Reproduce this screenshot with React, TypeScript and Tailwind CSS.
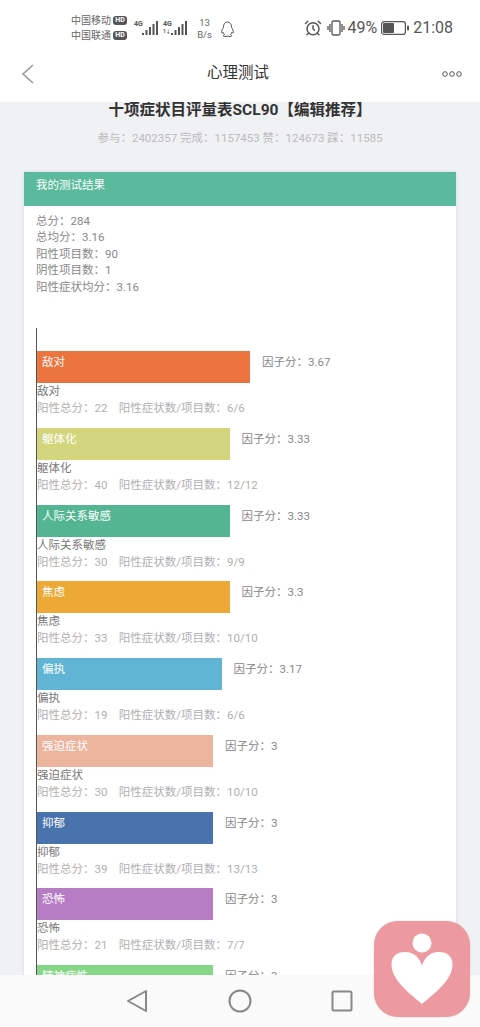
import { AlarmClock } from 'lucide-react';

const factors = [
  { name: '敌对', score: '3.67', width: 213, color: 'bg-[#ec743e]', total: 22, ratio: '6/6' },
  { name: '躯体化', score: '3.33', width: 192.5, color: 'bg-[#d4d67e]', total: 40, ratio: '12/12' },
  { name: '人际关系敏感', score: '3.33', width: 192.5, color: 'bg-[#53b591]', total: 30, ratio: '9/9' },
  { name: '焦虑', score: '3.3', width: 192.5, color: 'bg-[#eca935]', total: 33, ratio: '10/10' },
  { name: '偏执', score: '3.17', width: 184.5, color: 'bg-[#5fb5d3]', total: 19, ratio: '6/6' },
  { name: '强迫症状', score: '3', width: 176, color: 'bg-[#edb49e]', total: 30, ratio: '10/10' },
  { name: '抑郁', score: '3', width: 176, color: 'bg-[#4973ad]', total: 39, ratio: '13/13' },
  { name: '恐怖', score: '3', width: 176, color: 'bg-[#b67dc5]', total: 21, ratio: '7/7' },
  { name: '精神病性', score: '3', width: 176, color: 'bg-[#85d686]', total: 20, ratio: '10/10' },
];

function HdBadge() {
  return (
    <span className="flex h-[9px] w-[14px] items-center justify-center rounded-[3px] bg-[#555] text-[7px] font-bold leading-none text-white">
      HD
    </span>
  );
}

function Signal({ dot }: { dot?: boolean }) {
  return (
    <div className="flex items-start">
      <div className="flex w-[8px] flex-col text-[7px] font-bold leading-[8px] text-[#555]">
        <span>4G</span>
        <span className="h-[6px] text-[5px] leading-[6px]">{dot ? '1↓' : ''}</span>
      </div>
      <svg width="16" height="16" viewBox="0 0 16 16" fill="#555">
        <rect x="0" y="13" width="2" height="2" />
        <rect x="3.500" y="10" width="2" height="5" />
        <rect x="7" y="7" width="2" height="8" />
        <rect x="10.500" y="4" width="2" height="11" />
        <rect x="14" y="1" width="2" height="14" />
      </svg>
    </div>
  );
}

function StatusBar() {
  return (
    <div className="flex h-[56px] shrink-0 items-center bg-white pl-[71px] pr-[27px] text-[#555]">
      <div className="flex w-[59px] flex-col gap-[1px] text-[10px] leading-[14px] text-[#666]">
        <div className="flex items-center gap-[2px]"><span className="whitespace-nowrap">中国移动</span><HdBadge /></div>
        <div className="flex items-center gap-[2px]"><span className="whitespace-nowrap">中国联通</span><HdBadge /></div>
      </div>
      <div className="ml-[4px] flex gap-[5px]">
        <Signal />
        <Signal dot />
      </div>
      <div className="ml-[9px] flex w-[17px] flex-col items-center pt-[2px] text-[9.500px] leading-[12px] text-[#666]">
        <span>13</span>
        <span>B/s</span>
      </div>
      <svg className="ml-[7px] mt-[2px]" width="15" height="17" viewBox="0 0 15 17" fill="none" stroke="#555" strokeWidth="1">
        <path d="M3.400 6.500C3.400 3 5 1 7.500 1s4.100 2 4.100 5.500c.9 1.300 2 3.400 1.700 5.300-.5.500-1 .200-1.500-.500-.2 1-.7 1.800-1.300 2.300.8.300 1.300.800 1.200 1.300-.3.700-2.600.800-3.700.300h-1c-1.100.500-3.400.400-3.700-.300-.100-.500.400-1 1.200-1.300-.6-.500-1.100-1.300-1.300-2.300-.5.700-1 1-1.500.500-.3-1.900.8-4 1.700-5.300z" />
      </svg>
      <div className="ml-auto flex items-center">
        <AlarmClock size={18} strokeWidth={2} className="text-[#555]" />
        <svg className="ml-[5px]" width="18" height="16" viewBox="0 0 18 16" fill="none" stroke="#555" strokeWidth="1.300">
          <rect x="5" y="1" width="8" height="14" rx="1.500" />
          <path d="M3 4v8M1 6v4M15 4v8M17 6v4" />
        </svg>
        <span className="ml-[2px] text-[16px] leading-none">49%</span>
        <svg className="ml-[4px]" width="28" height="14" viewBox="0 0 28 14" fill="none">
          <rect x="0.600" y="0.600" width="23.800" height="12.800" rx="2.500" stroke="#555" strokeWidth="1.200" />
          <rect x="2" y="2" width="11" height="10" rx="1" fill="#555" />
          <rect x="26" y="4.500" width="2" height="5" rx="1" fill="#555" />
        </svg>
        <span className="ml-[4px] text-[16px] leading-none">21:08</span>
      </div>
    </div>
  );
}

function Header() {
  return (
    <div className="flex h-[46px] shrink-0 items-center justify-between bg-white pb-[10px] pl-[21px] pr-[18px]">
      <svg width="13" height="20" viewBox="0 0 13 20" fill="none" stroke="#999" strokeWidth="1.600">
        <path d="M12 1 2 10l10 9" />
      </svg>
      <span className="text-[15.500px] text-[#333]">心理测试</span>
      <svg width="20" height="6" viewBox="0 0 20 6" fill="none" stroke="#555" strokeWidth="1">
        <circle cx="3" cy="3" r="2.300" />
        <circle cx="10" cy="3" r="2.300" />
        <circle cx="17" cy="3" r="2.300" />
      </svg>
    </div>
  );
}

function FactorRow({ factor }: { factor: (typeof factors)[number] }) {
  return (
    <div className="mb-[10.750px]">
      <div className="flex items-start">
        <div className={`h-[32px] pl-[5px] pt-[3px] text-[11.500px] leading-[17px] text-white ${factor.color}`} style={{ width: factor.width }}>
          {factor.name}
        </div>
        <span className="ml-[12px] pt-[3px] text-[11.500px] leading-[17px] text-[#888]">因子分：{factor.score}</span>
      </div>
      <div className="text-[11.500px] leading-[17px] text-[#777]">{factor.name}</div>
      <div className="whitespace-pre text-[11.500px] leading-[17px] text-[#b0b0b0]">
        阳性总分：{factor.total}{'    '}阳性症状数/项目数：{factor.ratio}
      </div>
    </div>
  );
}

function ResultCard() {
  return (
    <div className="mx-[24px] mt-[26px] bg-white shadow-[0_0_3px_rgba(0,0,0,0.12)]">
      <div className="h-[34px] bg-[#5aba9b] pl-[12px] pt-[5px] text-[11.500px] leading-[16px] text-white">我的测试结果</div>
      <div className="px-[12px] pt-[6.500px] text-[11.500px] leading-[16.500px] text-[#888]">
        <div>总分：284</div>
        <div>总均分：3.16</div>
        <div>阳性项目数：90</div>
        <div>阴性项目数：1</div>
        <div>阳性症状均分：3.16</div>
      </div>
      <div className="ml-[12px] mt-[33px] border-l-[1.500px] border-[#555] pt-[23px]">
        {factors.map((factor) => (
          <FactorRow key={factor.name} factor={factor} />
        ))}
      </div>
    </div>
  );
}

function BottomNav() {
  return (
    <div className="flex h-[52px] shrink-0 items-center bg-[#fafafa] pl-[126px]">
      <svg width="22" height="24" viewBox="0 0 22 24" fill="none" stroke="#888" strokeWidth="2" strokeLinejoin="round">
        <path d="M20 2v20L2 12z" />
      </svg>
      <svg className="ml-[80px]" width="24" height="24" viewBox="0 0 24 24" fill="none" stroke="#888" strokeWidth="2">
        <circle cx="12" cy="12" r="10.500" />
      </svg>
      <svg className="ml-[79px]" width="22" height="22" viewBox="0 0 22 22" fill="none" stroke="#888" strokeWidth="2">
        <rect x="1.500" y="1.500" width="19" height="19" rx="1.500" />
      </svg>
    </div>
  );
}

function FloatingLogo() {
  return (
    <div className="absolute left-[374px] top-[921px] h-[96px] w-[96px] rounded-[24px] bg-[#ec9a9f] shadow-[0_0_2px_rgba(0,0,0,0.15)]">
      <svg width="96" height="96" viewBox="0 0 96 96" fill="#fff">
        <circle cx="48" cy="22" r="9.500" />
        <path d="M48 83C38 74 17.500 60 17.500 43.500 17.500 33.500 25 31 31 31c9 0 15 6 17 14 2-8 8-14 17-14 6 0 13.500 2.500 13.500 12.500C78.500 60 58 74 48 83z" />
      </svg>
    </div>
  );
}

export default function App() {
  return (
    <div className="relative flex h-[1027px] w-[480px] flex-col overflow-hidden bg-[#f0f1f3] font-['Roboto','Noto_Sans_CJK_SC',sans-serif]">
      <StatusBar />
      <Header />
      <div className="flex-1 overflow-hidden">
        <div className="text-center">
          <div className="text-[15.500px] font-bold leading-[16px] text-[#333]">十项症状目评量表SCL90【编辑推荐】</div>
          <div className="mt-[12px] text-[11.500px] leading-[16px] text-[#bbb]">参与：2402357 完成：1157453 赞：124673 踩：11585</div>
        </div>
        <ResultCard />
      </div>
      <BottomNav />
      <FloatingLogo />
    </div>
  );
}
